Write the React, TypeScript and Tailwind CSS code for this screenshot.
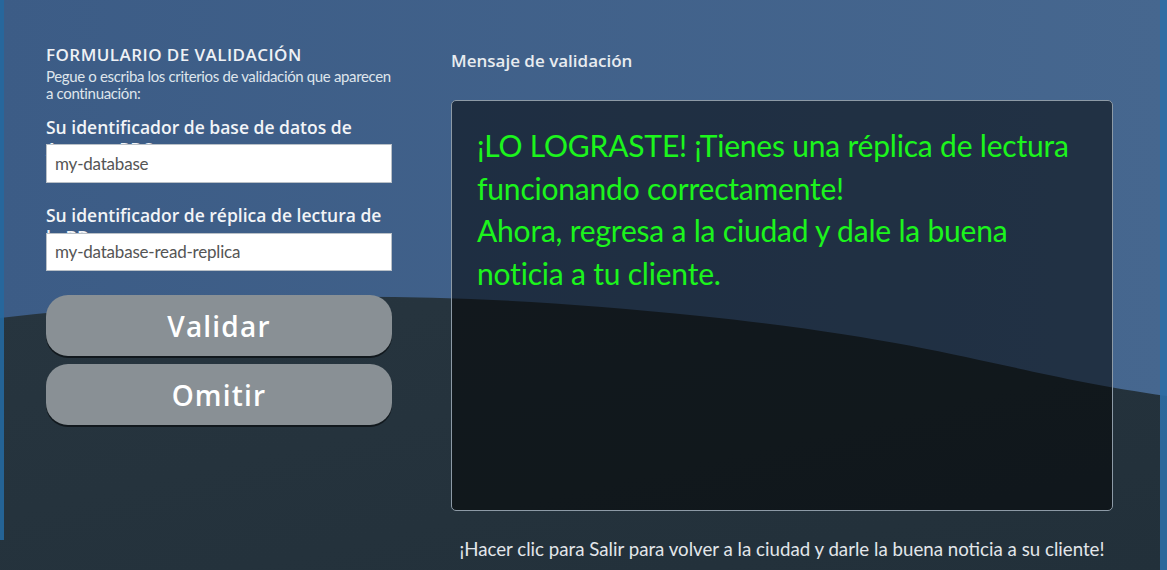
import React from "react";

export default function App() {
  return (
    <div className="relative w-[1167px] h-[570px] overflow-hidden bg-[#3e5e88]" style={{ fontFamily: "'Open Sans', sans-serif" }}>
      <svg className="absolute inset-0" width="1167" height="570" viewBox="0 0 1167 570">
        <defs>
          <linearGradient id="top" x1="0" y1="0" x2="1" y2="0">
            <stop offset="0" stopColor="#3c5c86" />
            <stop offset="1" stopColor="#46678f" />
          </linearGradient>
          <linearGradient id="dark" x1="0" y1="0" x2="1" y2="1">
            <stop offset="0" stopColor="#27353f" />
            <stop offset="1" stopColor="#22303a" />
          </linearGradient>
        </defs>
        <rect x="0" y="0" width="1167" height="570" fill="url(#top)" />
        <path d="M0 318 C 250 290, 450 290, 700 316 S 1000 372, 1167 396 L1167 570 L0 570 Z" fill="url(#dark)" />
        <rect x="0" y="0" width="4" height="540" fill="#25689f" opacity="0.9" />
        <rect x="1160" y="0" width="7" height="570" fill="#2d6ea5" opacity="0.9" />
      </svg>

      <div className="relative flex">
        <div className="ml-[46px] w-[346px] pt-[44px] flex flex-col">
          <div className="text-[17px] leading-[22px] font-semibold text-[#eef1f5] tracking-[0.45px]">FORMULARIO DE VALIDACIÓN</div>
          <div className="mt-[2px] text-[15px] leading-[17px] text-[#dfe5ec] tracking-[-0.35px] whitespace-nowrap" style={{ fontFamily: "Lato, sans-serif" }}>
            Pegue o escriba los criterios de validación que aparecen
            <br />
            a continuación:
          </div>
          <div className="mt-[14px] h-[28px] text-[17.5px] leading-[22px] font-semibold text-[#f2f4f7]">
            Su identificador de base de datos de Amazon RDS
          </div>
          <div className="relative z-10 h-[39px] bg-white border border-[#b9c0c7] flex items-center px-[8px] text-[17px] text-[#555] tracking-[-0.2px]" style={{ fontFamily: "Lato, sans-serif" }}>
            my-database
          </div>
          <div className="mt-[21px] h-[29px] text-[17.5px] leading-[22px] font-semibold text-[#f2f4f7]">
            Su identificador de réplica de lectura de la BD
          </div>
          <div className="relative z-10 h-[38px] bg-white border border-[#b9c0c7] flex items-center px-[8px] text-[17px] text-[#555] tracking-[-0.2px]" style={{ fontFamily: "Lato, sans-serif" }}>
            my-database-read-replica
          </div>
          <button className="mt-[24px] h-[61px] rounded-[22px] bg-[#899095] text-white text-[28px] font-semibold tracking-[1.2px] shadow-[0_2px_0_#11181d]">
            Validar
          </button>
          <button className="mt-[8px] h-[61px] rounded-[22px] bg-[#899095] text-white text-[28px] font-semibold tracking-[1.2px] shadow-[0_2px_0_#11181d]">
            Omitir
          </button>
        </div>

        <div className="ml-[59px] w-[662px] pt-[50px] flex flex-col">
          <div className="text-[17px] leading-[22px] font-semibold text-[#e8ecf0]">Mensaje de validación</div>
          <div className="mt-[28px] h-[411px] rounded-[5px] border border-[#8d9aa6] bg-[rgba(0,0,0,0.52)] px-[25px] pt-[23px]">
            <div className="text-[30px] leading-[42.5px] text-[#1cf51c] tracking-[-0.2px]" style={{ fontFamily: "Lato, sans-serif" }}>
              ¡LO LOGRASTE! ¡Tienes una réplica de lectura funcionando correctamente!
              <br />
              Ahora, regresa a la ciudad y dale la buena noticia a tu cliente.
            </div>
          </div>
          <div className="mt-[26px] text-center text-[18.7px] leading-[24px] text-[#e2e6ea]" style={{ fontFamily: "Lato, sans-serif" }}>
            ¡Hacer clic para Salir para volver a la ciudad y darle la buena noticia a su cliente!
          </div>
        </div>
      </div>
    </div>
  );
}
